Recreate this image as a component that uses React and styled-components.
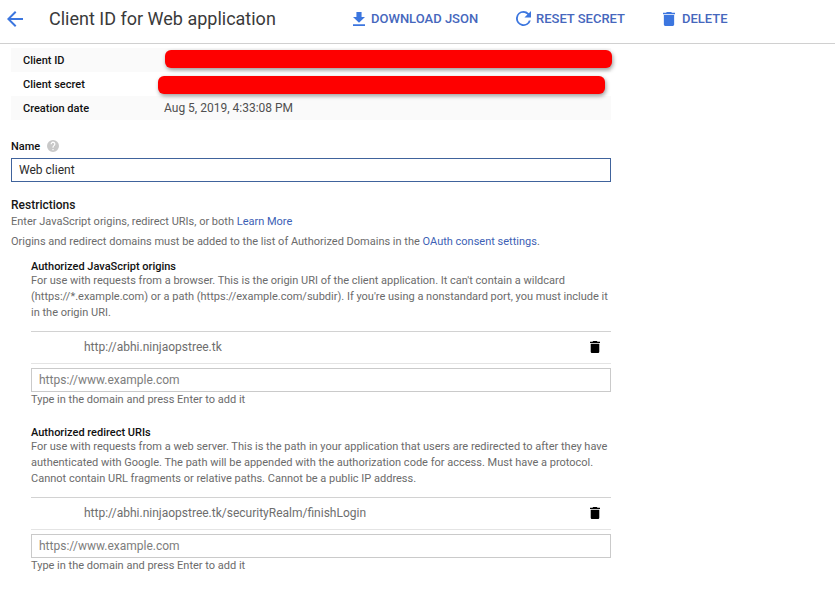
import React from "react";
import styled, { createGlobalStyle } from "styled-components";

const Global = createGlobalStyle`
  * { box-sizing: border-box; }
  body { margin: 0; background: #fff; font-family: Roboto, sans-serif; font-size: 11px; line-height: 16px; color: #6b6b6b; overflow: hidden; }
`;
const Header = styled.header`
  display: flex; align-items: center; height: 44px; padding: 0 0 6px 7px;
  border-bottom: 1px solid #d0d0d0; white-space: nowrap;
`;
const Title = styled.h1`
  margin: 0 0 0 26px; width: 304px; flex: none; font-size: 18px; font-weight: 400; line-height: 24px; color: #3a3a3a;
`;
const Action = styled.button`
  display: flex; align-items: center; gap: ${p => p.$gap}px; width: ${p => p.$w}px; flex: none;
  padding: 0; border: 0; background: none; color: #4667bd;
  font: 500 13px/20px Roboto, sans-serif;
  svg { color: #3c76df; }
`;
const Content = styled.main`
  width: 600px; margin: 4px 0 0 11px;
`;
const InfoRow = styled.div`
  display: flex; align-items: center; height: 24px; padding-left: 12px;
  background: ${p => (p.$shade ? "#fafafa" : "#fff")};
`;
const InfoLabel = styled.div`
  width: 141px; flex: none; padding-top: 1px; font-weight: 500; color: #111;
`;
const InfoValue = styled.div`
  font-size: 12px; color: #505050;
`;
const Redaction = styled.div`
  flex: none; width: 447px; height: 18px; margin: ${p => p.$margin}; border-radius: 6px;
  background: #fe0000; box-shadow: 1px 2px 4px rgba(0,0,0,.4);
`;
const NameLabel = styled.label`
  display: flex; align-items: center; gap: 7px; height: 16px; margin-top: 19px; font-weight: 500; color: #111;
`;
const Input = styled.input`
  display: block; width: 100%; height: 24px; margin-top: ${p => p.$top}px; padding: 0 7px;
  border: 1px solid ${p => (p.$active ? "#40639c" : "#cacaca")}; outline: 0; background: #fff;
  font: 12px Roboto, sans-serif; color: #2b2b2b;
  &::placeholder { color: #7d7d7d; opacity: 1; }
`;
const Heading = styled.h2`
  margin: 15px 0 0; font-size: 12px; line-height: 16px; font-weight: 500; color: #161616;
`;
const Text = styled.p`
  margin: ${p => p.$top || 0}px 0 0; white-space: nowrap;
`;
const Link = styled.a`
  color: #3d5fb5;
`;
const Section = styled.section`
  margin: ${p => p.$top}px 0 0 20px;
`;
const SubHeading = styled.h3`
  margin: 0; font-size: 11px; line-height: 12px; font-weight: 500; color: #111;
`;
const UriRow = styled.div`
  display: flex; align-items: center; justify-content: space-between; height: 33px;
  margin-top: 10px; padding: 0 11px 1px 53px; border: 1px solid #d2d2d2; border-width: 1px 0;
  border-bottom-color: #e4e4e4;
  font-size: 12px; color: #6e6e6e;
`;
const Back = styled.a`
  display: flex; flex: none; color: #3c76df;
`;
const Trash = styled.span`
  display: flex; color: #000;
`;
const Help = styled.span`
  display: flex; margin-bottom: 2px; color: #c8c8c8;
`;

const Icon = ({ width, height, box, d }) => (
  <svg width={width} height={height} viewBox={box} preserveAspectRatio="none" fill="currentColor"><path d={d} /></svg>
);
const TrashIcon = ({ width, height }) => (
  <Icon width={width} height={height} box="5 3 14 18" d="M6 19c0 1.1.9 2 2 2h8c1.1 0 2-.9 2-2V7H6v12zM19 4h-3.5l-1-1h-5l-1 1H5v2h14V4z" />
);

function UriSection({ top, title, lines, uri }) {
  return (
    <Section $top={top}>
      <SubHeading>{title}</SubHeading>
      <Text>
        {lines.map((line, i) => <React.Fragment key={line}>{i > 0 && <br />}{line}</React.Fragment>)}
      </Text>
      <UriRow>
        {uri}
        <Trash><TrashIcon width={10} height={12} /></Trash>
      </UriRow>
      <Input $top={4} placeholder="https://www.example.com" />
      <Text>Type in the domain and press Enter to add it</Text>
    </Section>
  );
}

export default function App() {
  return (
    <>
      <Global />
      <Header>
        <Back><Icon width={16} height={16} box="4 4 16 16" d="M20 11H7.83l5.59-5.59L12 4l-8 8 8 8 1.41-1.41L7.83 13H20v-2z" /></Back>
        <Title>Client ID for Web application</Title>
        <Action $gap={6} $w={163}>
          <Icon width={12} height={14} box="5 3 14 17" d="M19 9h-4V3H9v6H5l7 7 7-7zM5 18v2h14v-2z" />DOWNLOAD JSON
        </Action>
        <Action $gap={5} $w={147}>
          <Icon width={15} height={15} box="4 4 16 16" d="M17.65 6.35A7.96 7.96 0 0 0 12 4a8 8 0 1 0 7.73 10h-2.08A6 6 0 1 1 12 6c1.66 0 3.14.69 4.22 1.78L13 11h7V4z" />RESET SECRET
        </Action>
        <Action $gap={7} $w={80}><TrashIcon width={12} height={14} />DELETE</Action>
      </Header>
      <Content>
        <InfoRow $shade><InfoLabel>Client ID</InfoLabel><Redaction $margin="-2px 0 0 1px" /></InfoRow>
        <InfoRow><InfoLabel>Client secret</InfoLabel><Redaction $margin="2px 0 0 -6px" /></InfoRow>
        <InfoRow $shade><InfoLabel>Creation date</InfoLabel><InfoValue>Aug 5, 2019, 4:33:08 PM</InfoValue></InfoRow>
        <NameLabel>
          Name
          <Help><Icon width={12} height={12} box="2 2 20 20" d="M12 2a10 10 0 1 0 0 20 10 10 0 0 0 0-20zm1 17h-2v-2h2v2zm2.07-7.75-.9.92C13.45 12.9 13 13.5 13 15h-2v-.5c0-1.1.45-2.1 1.17-2.83l1.24-1.26A2 2 0 1 0 10 9H8a4 4 0 1 1 7.07 2.25z" /></Help>
        </NameLabel>
        <Input $top={3} $active defaultValue="Web client" />
        <Heading>Restrictions</Heading>
        <Text $top={1}>Enter JavaScript origins, redirect URIs, or both <Link>Learn More</Link></Text>
        <Text $top={4}>Origins and redirect domains must be added to the list of Authorized Domains in the <Link>OAuth consent settings</Link>.</Text>
        <UriSection
          top={11}
          title="Authorized JavaScript origins"
          lines={[
            "For use with requests from a browser. This is the origin URI of the client application. It can't contain a wildcard",
            "(https://*.example.com) or a path (https://example.com/subdir). If you're using a nonstandard port, you must include it",
            "in the origin URI.",
          ]}
          uri="http://abhi.ninjaopstree.tk"
        />
        <UriSection
          top={19}
          title="Authorized redirect URIs"
          lines={[
            "For use with requests from a web server. This is the path in your application that users are redirected to after they have",
            "authenticated with Google. The path will be appended with the authorization code for access. Must have a protocol.",
            "Cannot contain URL fragments or relative paths. Cannot be a public IP address.",
          ]}
          uri="http://abhi.ninjaopstree.tk/securityRealm/finishLogin"
        />
      </Content>
    </>
  );
}
